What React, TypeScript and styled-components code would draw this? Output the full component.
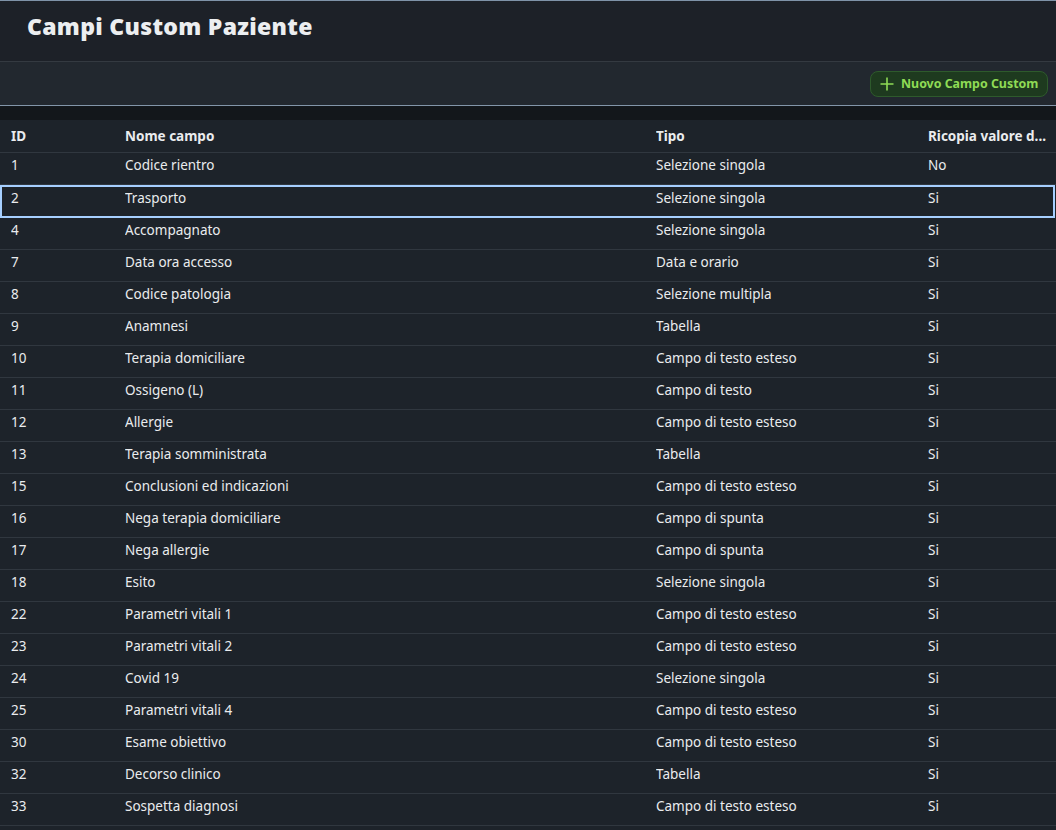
import React from "react";
import styled, { createGlobalStyle } from "styled-components";

const Global = createGlobalStyle`
  html, body { margin: 0; padding: 0; background: #1d232a; }
  body { font-family: "Noto Sans", "Open Sans", sans-serif; color: #eaecee; overflow: hidden; }
`;

const Page = styled.div`
  width: 1056px;
  height: 830px;
  display: flex;
  flex-direction: column;
  border-top: 1px solid #7f93a8;
  box-sizing: border-box;
  background: #1d232a;
`;

const Header = styled.header`
  height: 60px;
  display: flex;
  align-items: center;
  padding-left: 27px;
  background: #1d2128;
  border-bottom: 1px solid #343a41;
`;

const Title = styled.h1`
  margin: -10px 0 0 0;
  font-family: "Open Sans", Lato, sans-serif;
  font-weight: 800;
  font-size: 23px;
  letter-spacing: 0.3px;
  color: #eceef0;
`;

const Toolbar = styled.div`
  height: 43px;
  display: flex;
  align-items: center;
  justify-content: flex-end;
  padding-right: 8px;
  background: #22282f;
  border-bottom: 1px solid #8396a9;
`;

const AddButton = styled.button`
  width: 178px;
  height: 26px;
  display: flex;
  align-items: center;
  gap: 7px;
  padding: 0 0 0 9px;
  background: #1e3a1f;
  border: 1px solid #2e5a2c;
  border-radius: 8px;
  color: #8fdb55;
  font-family: "Noto Sans", sans-serif;
  font-weight: 700;
  font-size: 12.4px;
  white-space: nowrap;
  cursor: pointer;
`;

const Band = styled.div`
  height: 14px;
  background: #13171b;
`;

const Table = styled.div`
  display: flex;
  flex-direction: column;
`;

const Row = styled.div<{ $head?: boolean; $selected?: boolean }>`
  display: grid;
  grid-template-columns: 114px 531px 272px 1fr;
  align-items: center;
  height: ${(p) => (p.$head ? "33px" : "32px")};
  box-sizing: border-box;
  padding-left: 11px;
  padding-bottom: ${(p) => (p.$head ? "0" : "7px")};
  border-bottom: 1px solid #30373f;
  font-size: 13.5px;
  font-weight: ${(p) => (p.$head ? 700 : 400)};
  color: #eaecee;
  white-space: nowrap;
  ${(p) =>
    p.$selected &&
    `
    border: 2px solid #a6cfff;
    margin-right: 1px;
    padding-left: 9px;
    padding-bottom: 7px;
    height: 33px;
  `}
`;

const Cell = styled.div`
  overflow: hidden;
  text-overflow: ellipsis;
  padding-right: 8px;
`;

const PlusIcon = () => (
  <svg width="14" height="14" viewBox="0 0 14 14" fill="none">
    <path d="M7 0.5V13.5M0.5 7H13.5" stroke="#8fdb55" strokeWidth="1.6" />
  </svg>
);

const rows: [string, string, string, string][] = [
  ["1", "Codice rientro", "Selezione singola", "No"],
  ["2", "Trasporto", "Selezione singola", "Si"],
  ["4", "Accompagnato", "Selezione singola", "Si"],
  ["7", "Data ora accesso", "Data e orario", "Si"],
  ["8", "Codice patologia", "Selezione multipla", "Si"],
  ["9", "Anamnesi", "Tabella", "Si"],
  ["10", "Terapia domiciliare", "Campo di testo esteso", "Si"],
  ["11", "Ossigeno (L)", "Campo di testo", "Si"],
  ["12", "Allergie", "Campo di testo esteso", "Si"],
  ["13", "Terapia somministrata", "Tabella", "Si"],
  ["15", "Conclusioni ed indicazioni", "Campo di testo esteso", "Si"],
  ["16", "Nega terapia domiciliare", "Campo di spunta", "Si"],
  ["17", "Nega allergie", "Campo di spunta", "Si"],
  ["18", "Esito", "Selezione singola", "Si"],
  ["22", "Parametri vitali 1", "Campo di testo esteso", "Si"],
  ["23", "Parametri vitali 2", "Campo di testo esteso", "Si"],
  ["24", "Covid 19", "Selezione singola", "Si"],
  ["25", "Parametri vitali 4", "Campo di testo esteso", "Si"],
  ["30", "Esame obiettivo", "Campo di testo esteso", "Si"],
  ["32", "Decorso clinico", "Tabella", "Si"],
  ["33", "Sospetta diagnosi", "Campo di testo esteso", "Si"],
];

export default function App() {
  return (
    <>
      <Global />
      <Page>
        <Header>
          <Title>Campi Custom Paziente</Title>
        </Header>
        <Toolbar>
          <AddButton>
            <PlusIcon />
            Nuovo Campo Custom
          </AddButton>
        </Toolbar>
        <Band />
        <Table>
          <Row $head>
            <Cell>ID</Cell>
            <Cell>Nome campo</Cell>
            <Cell>Tipo</Cell>
            <Cell>Ricopia valore d...</Cell>
          </Row>
          {rows.map((r) => (
            <Row key={r[0]} $selected={r[0] === "2"}>
              <Cell>{r[0]}</Cell>
              <Cell>{r[1]}</Cell>
              <Cell>{r[2]}</Cell>
              <Cell>{r[3]}</Cell>
            </Row>
          ))}
        </Table>
      </Page>
    </>
  );
}
